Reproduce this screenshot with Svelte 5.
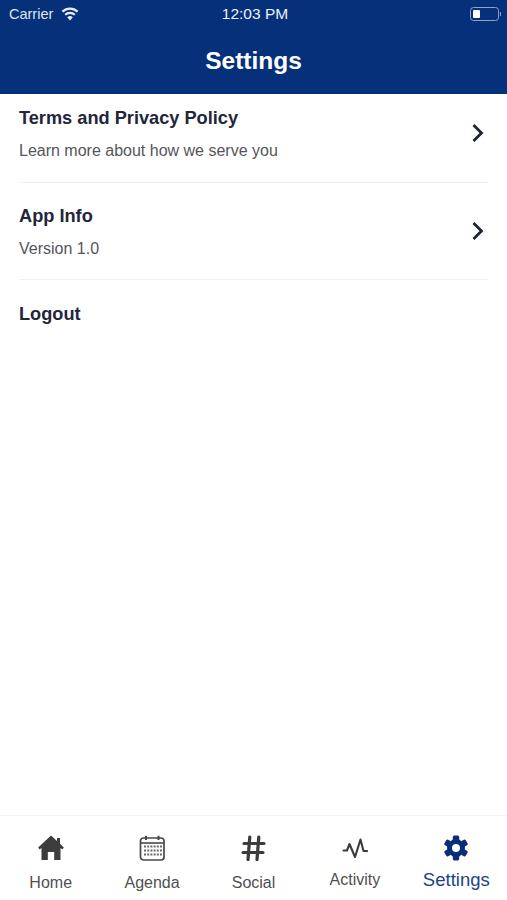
<script>
  const rows = [
    { title: 'Terms and Privacy Policy', sub: 'Learn more about how we serve you' },
    { title: 'App Info', sub: 'Version 1.0' }
  ];
</script>

<div class="page">
  <header>
    <div class="status">
      <div class="left">
        <span>Carrier</span>
        <svg width="18" height="14" viewBox="0 0 18 14">
          <path d="M9 13.5 L6.2 10.2 A4.2 4.2 0 0 1 11.8 10.2 Z" fill="#e6ecf5"/>
          <path d="M4.2 7.8 A7 7 0 0 1 13.8 7.8" fill="none" stroke="#e6ecf5" stroke-width="2.2"/>
          <path d="M1.4 4.6 A11 11 0 0 1 16.6 4.6" fill="none" stroke="#e6ecf5" stroke-width="2.2"/>
        </svg>
      </div>
      <span class="time">12:03 PM</span>
      <div class="battery">
        <div class="cell"><div class="charge"></div></div>
        <div class="nub"></div>
      </div>
    </div>
    <h1>Settings</h1>
  </header>

  <main>
    {#each rows as row}
      <div class="row">
        <div class="rowtext">
          <div class="title">{row.title}</div>
          <div class="sub">{row.sub}</div>
        </div>
        <svg class="chev" width="14" height="20" viewBox="0 0 14 20">
          <path d="M2.5 2 L10.5 10 L2.5 18" fill="none" stroke="#1f2338" stroke-width="2.8"/>
        </svg>
      </div>
    {/each}
    <div class="title logout">Logout</div>
  </main>

  <nav>
    <div class="tab">
      <svg width="26" height="26" viewBox="0 0 26 26">
        <path d="M13 0.5 L19 6 V3 H22 V8.8 L25.8 12.4 L24.4 14.6 L22.5 13 V25 H16.2 V17 H9.8 V25 H3.5 V13 L1.6 14.6 L0.2 12.4 Z" fill="#3c3c3e"/>
      </svg>
      <span>Home</span>
    </div>
    <div class="tab">
      <svg width="26" height="26" viewBox="0 0 26 26">
        <rect x="1.5" y="3" width="23.5" height="22" rx="3" fill="none" stroke="#48484a" stroke-width="1.7"/>
        <path d="M1.5 8 H25" stroke="#48484a" stroke-width="1.6"/>
        <path d="M7 0.8 V5 M19.5 0.8 V5" stroke="#48484a" stroke-width="2"/>
        {#each [10.5, 14.5, 18.5] as y}
          {#each [5, 8.2, 11.4, 14.6, 17.8, 21] as x}
            <rect x={x} y={y} width="2" height="2" fill="#6a6a6c"/>
          {/each}
        {/each}
      </svg>
      <span>Agenda</span>
    </div>
    <div class="tab">
      <svg width="26" height="26" viewBox="0 0 26 26">
        <path d="M9.8 2 L8 24.5 M18.8 2 L17 24.5 M4 8.5 H24 M3 17.5 H23" fill="none" stroke="#3c3c3e" stroke-width="3.2" stroke-linecap="round"/>
      </svg>
      <span>Social</span>
    </div>
    <div class="tab activity">
      <svg width="26" height="22" viewBox="0 0 26 22">
        <path d="M1.5 12.5 H5 L7.5 6 L13 19 L18.5 1.5 L21.5 13 H25" fill="none" stroke="#3c3c3e" stroke-width="2.1" stroke-linecap="round" stroke-linejoin="round"/>
      </svg>
      <span>Activity</span>
    </div>
    <div class="tab active">
      <svg width="26" height="26" viewBox="0 0 26 26">
        <circle cx="13" cy="13" r="6.5" fill="none" stroke="#0a2f7a" stroke-width="5"/>
        <g fill="#0a2f7a">
          {#each [0, 60, 120, 180, 240, 300] as a}
            <rect x="9.8" y="0.6" width="6.4" height="6" rx="1.6" transform="rotate({a} 13 13)"/>
          {/each}
        </g>
      </svg>
      <span>Settings</span>
    </div>
  </nav>
</div>

<style>
  :global(body) {
    margin: 0;
    background: #fff;
  }

  .page {
    display: flex;
    flex-direction: column;
    height: 900px;
    font-family: "Liberation Sans", Arial, sans-serif;
  }

  header {
    background: #07307a;
    color: #fff;
    height: 94px;
    flex: none;
  }

  .status {
    display: grid;
    grid-template-columns: 1fr auto 1fr;
    align-items: center;
    height: 28px;
    padding: 0 6px 0 9px;
    font-size: 14.5px;
    color: #dfe6f1;
  }

  .left {
    display: flex;
    align-items: center;
    gap: 8px;
  }

  .time {
    font-size: 15.5px;
    color: #eef2f8;
  }

  .battery {
    display: flex;
    align-items: center;
    justify-content: flex-end;
    gap: 1px;
  }

  .cell {
    box-sizing: border-box;
    width: 29px;
    height: 14px;
    border: 1px solid #8ea3c6;
    border-radius: 3.5px;
    padding: 2px;
  }

  .charge {
    width: 7px;
    height: 100%;
    background: #fff;
    border-radius: 1px;
  }

  .nub {
    width: 1.5px;
    height: 4px;
    background: #8ea3c6;
  }

  h1 {
    margin: 16px 0 0;
    text-align: center;
    font-size: 24.5px;
    line-height: 34px;
    font-weight: 700;
  }

  main {
    flex: 1;
    padding: 0 19px;
  }

  .row {
    display: flex;
    align-items: center;
    justify-content: space-between;
    border-bottom: 1px solid #f1f1f3;
    padding: 22px 3px 20px 0;
  }

  .row:first-child {
    padding: 13px 3px 21px 0;
  }

  .chev {
    margin-bottom: 2px;
  }

  .rowtext {
    display: flex;
    flex-direction: column;
    gap: 12px;
  }

  .title {
    font-size: 18.2px;
    line-height: 22px;
    font-weight: 700;
    color: #23263a;
  }

  .sub {
    font-size: 16px;
    line-height: 20px;
    color: #55555a;
  }

  .logout {
    margin-top: 23px;
  }

  nav {
    flex: none;
    display: grid;
    grid-template-columns: repeat(5, 1fr);
    height: 85px;
    border-top: 1px solid #f3f3f4;
    box-sizing: border-box;
  }

  .tab {
    display: flex;
    flex-direction: column;
    align-items: center;
    padding-top: 19px;
    color: #4f4f52;
    font-size: 16px;
  }

  .tab span {
    margin-top: 12px;
    line-height: 20px;
  }

  .activity svg {
    margin-top: 3px;
  }

  .activity span {
    margin-top: 10px;
  }

  .active {
    color: #1d4287;
    font-size: 18.5px;
  }

  .active span {
    margin-top: 9px;
  }
</style>
